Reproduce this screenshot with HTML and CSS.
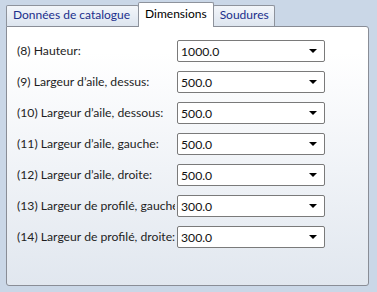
FILE: index.html
```html
<!DOCTYPE html>
<html lang="fr">
<head>
    <meta charset="UTF-8">
    <title>Dimensions</title>
    <link rel="stylesheet" href="styles.css">
</head>
<body>
    <div class="fenetre">
        <div class="onglets">
            <div class="onglet">Données de catalogue</div>
            <div class="onglet actif">Dimensions</div>
            <div class="onglet">Soudures</div>
        </div>
        <div class="panneau">
            <div class="grille">
                <label class="libelle">(8) Hauteur:</label>
                <div class="combo"><span>1000.0</span><i class="fleche"></i></div>
                <label class="libelle">(9) Largeur d’aile, dessus:</label>
                <div class="combo"><span>500.0</span><i class="fleche"></i></div>
                <label class="libelle">(10) Largeur d’aile, dessous:</label>
                <div class="combo"><span>500.0</span><i class="fleche"></i></div>
                <label class="libelle">(11) Largeur d’aile, gauche:</label>
                <div class="combo"><span>500.0</span><i class="fleche"></i></div>
                <label class="libelle">(12) Largeur d’aile, droite:</label>
                <div class="combo"><span>500.0</span><i class="fleche"></i></div>
                <label class="libelle">(13) Largeur de profilé, gauche:</label>
                <div class="combo"><span>300.0</span><i class="fleche"></i></div>
                <label class="libelle">(14) Largeur de profilé, droite:</label>
                <div class="combo"><span>300.0</span><i class="fleche"></i></div>
            </div>
        </div>
    </div>
</body>
</html>
```
FILE: styles.css
```css
body{
    margin: 0;
    background-color: #cad7e7;
    font-family: "Segoe UI", Lato, "Noto Sans", sans-serif;
    font-size: 12.2px;
    color: #1e1e1e;
}
.fenetre{
    width: 377px;
    height: 292px;
    box-sizing: border-box;
    padding: 2px 8px 6px 6px;
}
.onglets{
    display: flex;
    align-items: flex-end;
    height: 25px;
    position: relative;
    z-index: 1;
    margin-bottom: -1px;
    font-size: 12px;
}
.onglet{
    height: 21px;
    box-sizing: border-box;
    padding: 1px 5px 0 6px;
    border: 1px solid #8e939c;
    border-bottom: none;
    border-radius: 2px 2px 0 0;
    background: linear-gradient(#f3f6fa, #dde5ef);
    color: #1b2f8c;
    margin-bottom: 1px;
}
.onglet:first-child{
    padding-right: 8px;
}
.onglet + .onglet{
    margin-left: -1px;
}
.onglet.actif{
    height: 25px;
    padding: 3px 6px 0 6px;
    background: #fff;
    color: #000;
    margin-bottom: 0;
    position: relative;
    z-index: 2;
}
.panneau{
    height: 260px;
    box-sizing: border-box;
    border: 1px solid #898d96;
    border-radius: 0 3px 3px 3px;
    background: linear-gradient(#ffffff 10%, #e1e7ef);
    padding: 13px 0 0 10px;
}
.grille{
    display: grid;
    grid-template-columns: 158px 148px;
    column-gap: 2px;
    row-gap: 9px;
}
.libelle{
    line-height: 22px;
    white-space: nowrap;
    overflow: hidden;
}
.combo{
    height: 22px;
    box-sizing: border-box;
    border: 1px solid #7a7a7a;
    border-radius: 2px;
    background: #fff;
    display: flex;
    align-items: center;
    justify-content: space-between;
    padding: 0 7px 0 3px;
    color: #111;
}
.fleche{
    width: 0;
    height: 0;
    border-left: 4px solid transparent;
    border-right: 4px solid transparent;
    border-top: 4px solid #000;
}
```
